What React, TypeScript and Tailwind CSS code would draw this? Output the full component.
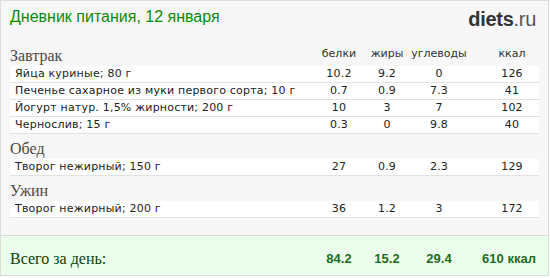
import React from 'react';

type Item = { name: string; p: string; f: string; c: string; kcal: string };

const meals: { title: string; items: Item[] }[] = [
  {
    title: 'Завтрак',
    items: [
      { name: 'Яйца куриные; 80 г', p: '10.2', f: '9.2', c: '0', kcal: '126' },
      { name: 'Печенье сахарное из муки первого сорта; 10 г', p: '0.7', f: '0.9', c: '7.3', kcal: '41' },
      { name: 'Йогурт натур. 1,5% жирности; 200 г', p: '10', f: '3', c: '7', kcal: '102' },
      { name: 'Чернослив; 15 г', p: '0.3', f: '0', c: '9.8', kcal: '40' },
    ],
  },
  {
    title: 'Обед',
    items: [{ name: 'Творог нежирный; 150 г', p: '27', f: '0.9', c: '2.3', kcal: '129' }],
  },
  {
    title: 'Ужин',
    items: [{ name: 'Творог нежирный; 200 г', p: '36', f: '1.2', c: '3', kcal: '172' }],
  },
];

const grid = 'grid grid-cols-[1fr_48px_48px_56px_72px]';
const sans = "font-['DejaVu_Sans',Verdana,sans-serif]";
const serif = "font-['Liberation_Serif',Georgia,serif]";
const arial = "font-['Liberation_Sans',Arial,sans-serif]";

export default function App() {
  return (
    <div className="w-[550px] h-[278px] bg-white">
      <div className="w-[549px] h-[276px] border border-[#dcdcdc] bg-[#f7f7f7] flex flex-col">
        {/* header */}
        <div className="flex justify-between items-start px-[9px] pt-[6px] h-[40px]">
          <h1 className={`${arial} text-[16px] leading-[20px] text-[#0b8a0b]`}>Дневник питания, 12 января</h1>
          <div className={`${arial} text-[20px] leading-[24px] pr-[3px] tracking-[-0.3px]`}>
            <span className="font-bold text-[#333]">diets</span>
            <span className="text-[#555]">.ru</span>
          </div>
        </div>

        {/* meals */}
        <div className="px-[9px] flex flex-col">
          {meals.map((meal, mi) => (
            <div key={mi} className="flex flex-col">
              <div className={`${grid} h-[25px] items-end`}>
                <span className={`${serif} text-[16px] leading-[20px] text-[#4a4a4a]`}>{meal.title}</span>
                {mi === 0 && (
                  <>
                    <span className={`${sans} text-[11px] text-[#333] text-center leading-[14px] pb-[5px]`}>белки</span>
                    <span className={`${sans} text-[11px] text-[#333] text-center leading-[14px] pb-[5px]`}>жиры</span>
                    <span className={`${sans} text-[11px] text-[#333] text-center leading-[14px] pb-[5px]`}>углеводы</span>
                    <span className={`${sans} text-[11px] text-[#333] text-center leading-[14px] pb-[5px] pl-[18px]`}>ккал</span>
                  </>
                )}
              </div>
              {meal.items.map((it, ii) => (
                <div
                  key={ii}
                  className={`${grid} ${sans} h-[17px] items-center bg-white border-b border-[#e2e2e2] text-[11px] text-[#222] tracking-[0.2px]`}
                >
                  <span className="pl-[5px] whitespace-nowrap">{it.name}</span>
                  <span className="text-center">{it.p}</span>
                  <span className="text-center">{it.f}</span>
                  <span className="text-center">{it.c}</span>
                  <span className="text-center pl-[18px]">{it.kcal}</span>
                </div>
              ))}
            </div>
          ))}
        </div>

        {/* totals */}
        <div className="mt-auto h-[40px] bg-[#ebfeeb] border-t border-[#dadada] px-[9px] pt-[6px]">
          <div className={`${grid} h-full items-center`}>
            <span className={`${serif} text-[16px] text-[#0a430a]`}>Всего за день:</span>
            <span className={`${arial} font-bold text-[13px] text-[#1f6b1f] text-center`}>84.2</span>
            <span className={`${arial} font-bold text-[13px] text-[#1f6b1f] text-center`}>15.2</span>
            <span className={`${arial} font-bold text-[13px] text-[#1f6b1f] text-center`}>29.4</span>
            <span className={`${arial} font-bold text-[13px] text-[#1f6b1f] text-center pl-[12px]`}>610 ккал</span>
          </div>
        </div>
      </div>
    </div>
  );
}
